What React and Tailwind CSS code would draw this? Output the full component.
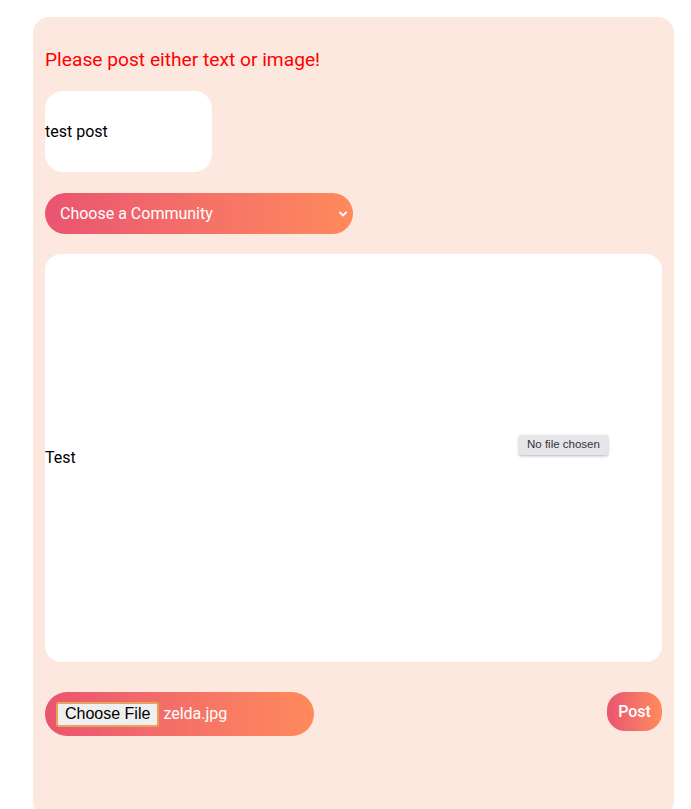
export default function App() {
    const font = { fontFamily: 'Roboto, "Liberation Sans", sans-serif' };

    return (
        <div className="w-[691px] h-[809px] bg-white overflow-hidden" style={font}>
            <div className="ml-[33px] mt-[17px] w-[641px] h-[800px] bg-[#fce8de] rounded-[16px] px-[12px] pt-[31px]">
                {/* Error */}
                <p className="text-[19.2px] leading-[24px] text-[#ff0000]">Please post either text or image!</p>

                {/* Title */}
                <div className="mt-[19px] w-[167px] h-[81px] bg-white rounded-[18px] flex items-center text-[16px] text-black">
                    test post
                </div>

                {/* Community select */}
                <div className="mt-[21px] w-[308px] h-[41px] rounded-full bg-gradient-to-r from-[#ea5470] to-[#ff8a5b] flex items-center justify-between pl-[15px] pr-[5px] text-white text-[16px]">
                    <span>Choose a Community</span>
                    <svg width="10" height="10" viewBox="0 0 10 10" fill="none" stroke="white" strokeWidth="1.8" strokeLinecap="round" strokeLinejoin="round">
                        <path d="M2 3.5 L5 6.5 L8 3.5" />
                    </svg>
                </div>

                {/* Body */}
                <div className="relative mt-[20px] w-[617px] h-[408px] bg-white rounded-[16px] flex items-center text-[16px] text-black">
                    <span>Test</span>
                    <div className="absolute left-[474px] top-[181px] h-[20px] px-[8px] flex items-center bg-[#e6e5ea] rounded-[2px] shadow-[0_1px_3px_rgba(0,0,0,0.3)] text-[11.5px] text-[#333]" style={{ fontFamily: '"Liberation Sans", Arial, sans-serif' }}>
                        No file chosen
                    </div>
                </div>

                {/* Footer */}
                <div className="mt-[30px] flex items-start justify-between">
                    <div className="w-[269px] h-[44px] rounded-full bg-gradient-to-r from-[#ea5470] to-[#ff8a5b] flex items-center pl-[11px]">
                        <span className="h-[25px] px-[7px] flex items-center bg-[#efefef] border-2 border-[#e8a35e] rounded-[3px] text-[16px] text-black" style={{ fontFamily: '"Liberation Sans", Arial, sans-serif' }}>
                            Choose File
                        </span>
                        <span className="ml-[4px] text-[16px] text-white">zelda.jpg</span>
                    </div>
                    <div className="w-[55px] h-[39px] rounded-[18px] bg-gradient-to-r from-[#ea5470] to-[#ff8a5b] flex items-center justify-center text-white text-[16px] font-medium">
                        Post
                    </div>
                </div>
            </div>
        </div>
    );
}
